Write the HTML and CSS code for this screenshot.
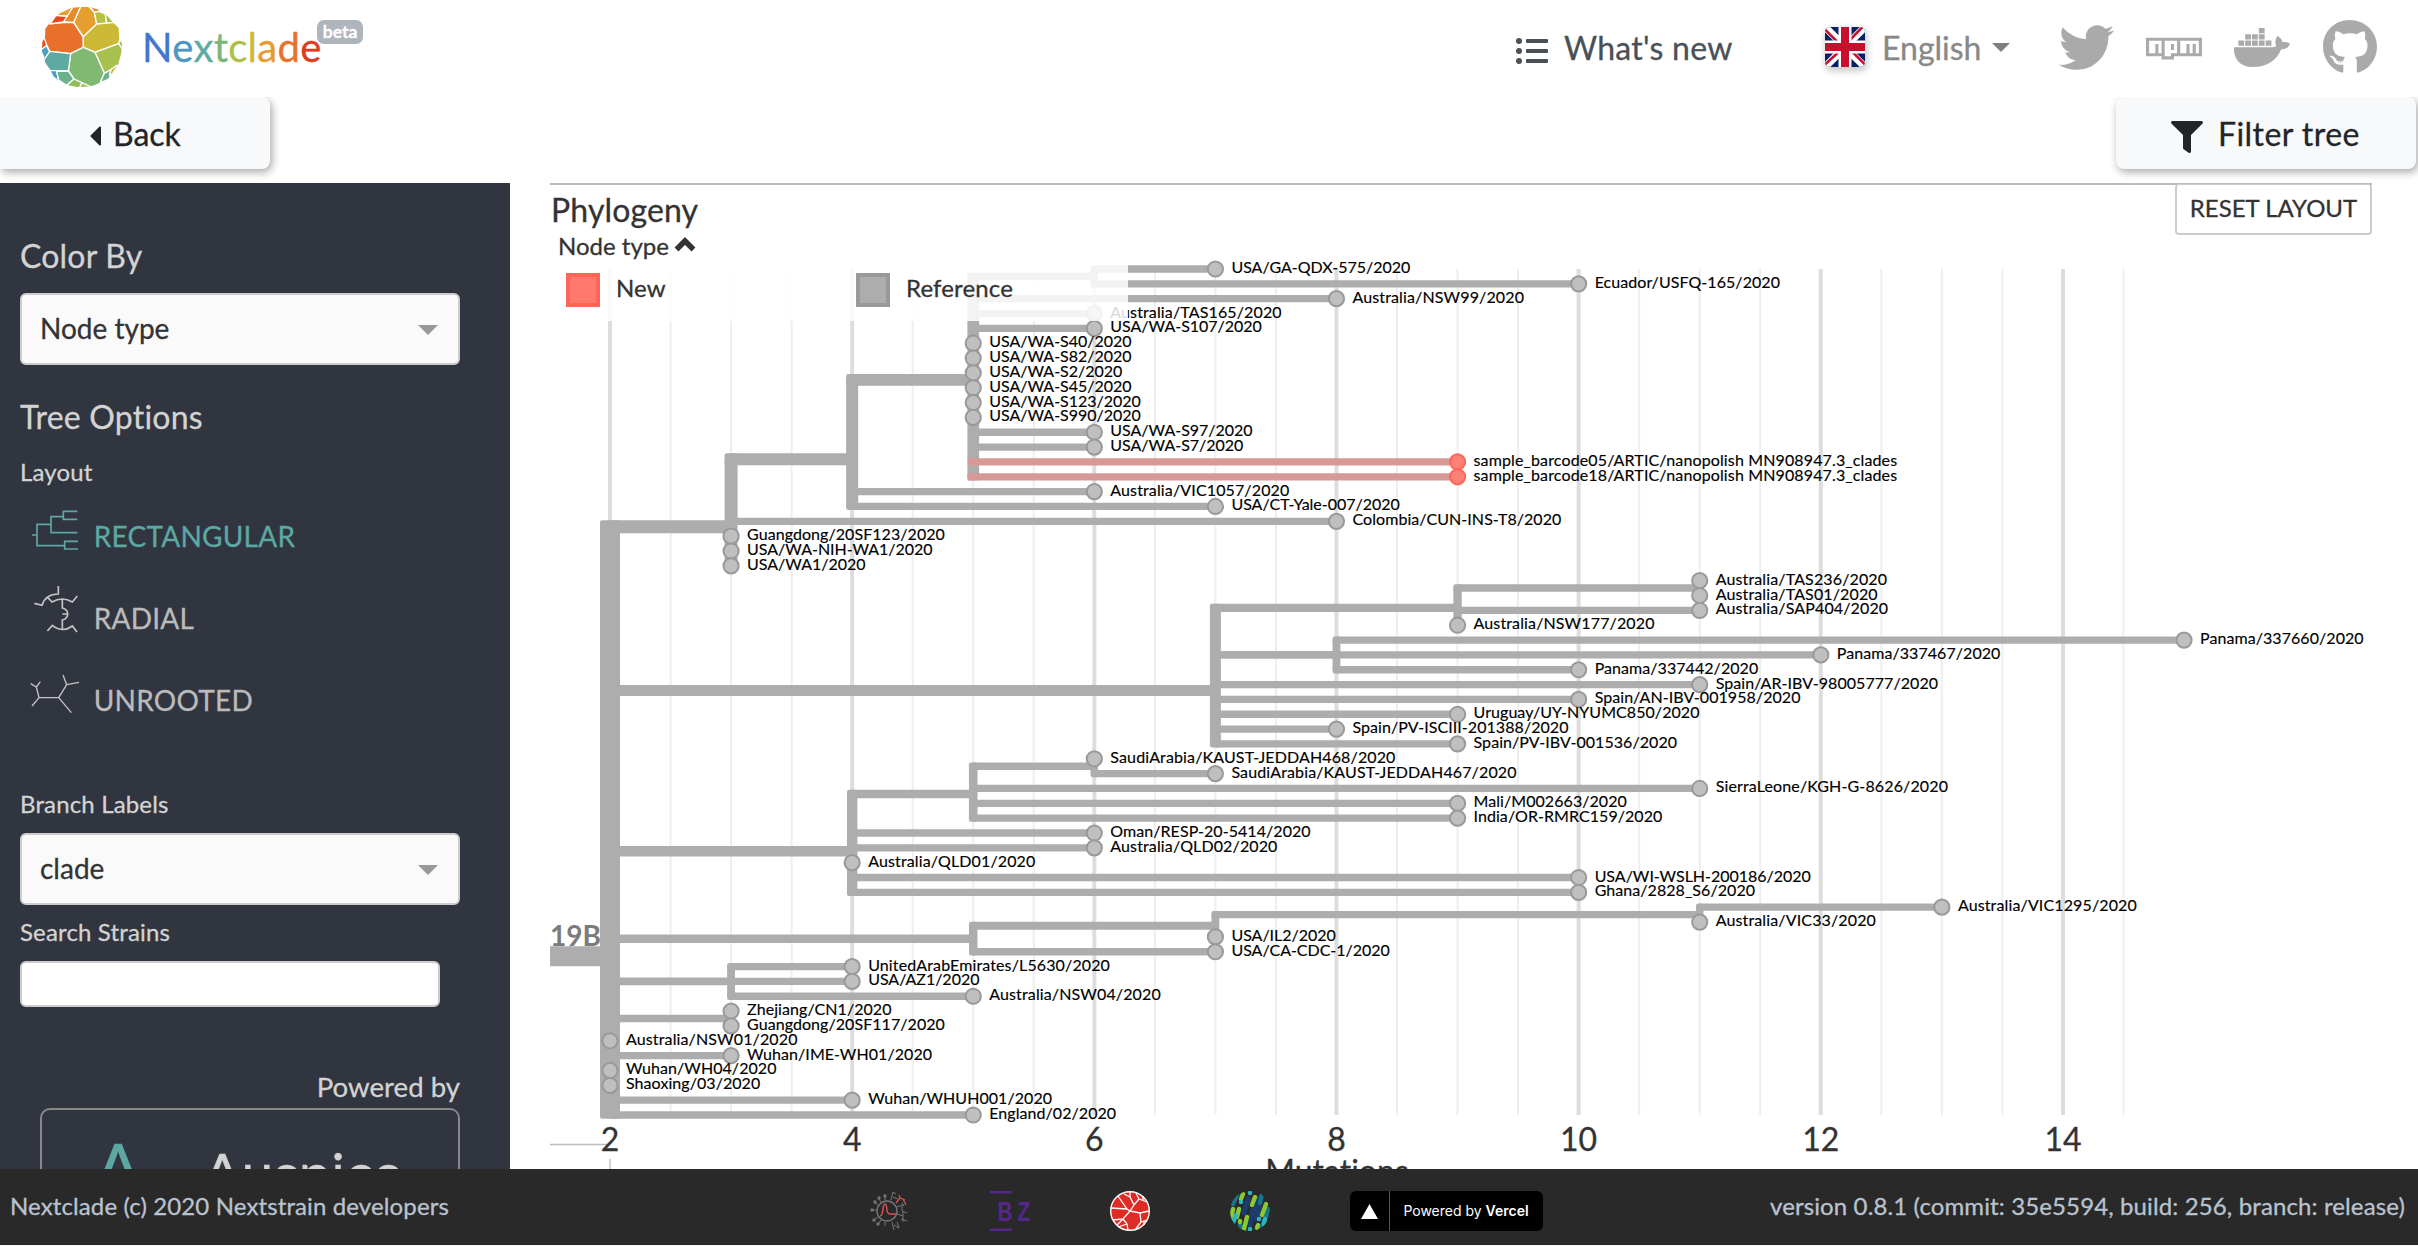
FILE: index.html
```html
<!DOCTYPE html>
<html lang="en">
<head>
<meta charset="utf-8">
<title>Nextclade</title>
<link rel="stylesheet" href="styles.css">
</head>
<body>
<div class="page">
  <header class="header">
    <a class="brand">
      <svg class="brand-logo" viewBox="126 21 240 240">
        <defs><clipPath id="ball"><path d="M240 21 L268 21 L292 28 L322 48 L340 68 L356 84 L358 120 L366 130 L364 158 L355 192 L340 214 L326 238 L304 244 L294 254 L266 259 L238 262 L204 256 L180 246 L160 228 L150 208 L136 190 L134 172 L126 156 L127 125 L135 112 L136 86 L156 60 L182 38 L214 24Z"/></clipPath></defs>
        <g clip-path="url(#ball)" stroke="#fff" stroke-width="4" stroke-linejoin="round">
          <path fill="#e8702a" d="M126 70L221 67L250 112V142L212 161L149 154L132 118Z"/>
          <path fill="#e49f2f" d="M221 67L244 15H262L283 37L290 72L250 110Z"/>
          <path fill="#e88a2b" d="M190 65L216 15H244L221 67Z"/>
          <path fill="#e2491f" d="M150 72L168 46L202 48L190 66Z"/>
          <path fill="#e49f2f" d="M168 46L200 18L218 22L202 48Z"/>
          <path fill="#e88a2b" d="M266 15L310 15L296 36L283 37Z"/>
          <path fill="#b6c143" d="M283 37L296 34L316 42L320 70L290 72Z"/>
          <path fill="#a5bf4c" d="M316 42L350 40L345 67L320 70Z"/>
          <path fill="#ccb935" d="M250 110L290 72L345 67L368 80L356 131L285 157L250 142Z"/>
          <path fill="#a8c04e" d="M285 157L356 131L380 150L365 195L313 220Z"/>
          <path fill="#9fbe50" d="M356 131L362 118L376 130V160Z"/>
          <path fill="#7fb972" d="M250 142L285 157L313 220L300 250L268 265L222 237L205 213L212 161Z"/>
          <path fill="#5ea9a1" d="M149 154L212 161L205 213H150L128 180Z"/>
          <path fill="#4f9fbd" d="M120 150L138 136L149 154L132 180Z"/>
          <path fill="#e2491f" d="M120 120L132 112L140 136L120 152Z"/>
          <path fill="#4f9fbd" d="M140 212H170L176 246L150 240Z"/>
          <path fill="#6bb18c" d="M170 214L205 213L222 237L200 256L176 240Z"/>
          <path fill="#93bc5c" d="M200 256L222 237L246 248L238 268Z"/>
          <path fill="#a8c04e" d="M238 264L246 248L268 258L262 270Z"/>
          <path fill="#6bb18c" d="M313 220L334 208L328 236L300 250Z"/>
          <path fill="#ccb935" d="M334 208L350 196L350 220L328 224Z"/>
        </g>
      </svg>
      <span class="brand-name"><i style="color:#4377cd">N</i><i style="color:#4c97bf">e</i><i style="color:#5eaba2">x</i><i style="color:#79b778">t</i><i style="color:#aebf48">c</i><i style="color:#ccb935">l</i><i style="color:#e69b2e">a</i><i style="color:#e8722a">d</i><i style="color:#df3b21">e</i></span>
      <span class="badge">beta</span>
    </a>
    <nav class="links">
      <a class="whats-new">
        <svg class="list-icon" viewBox="0 0 32 26" fill="#495057"><circle cx="3" cy="3" r="3"/><circle cx="3" cy="13" r="3"/><circle cx="3" cy="23" r="3"/><rect x="10" y="1" width="22" height="4" rx="1"/><rect x="10" y="11" width="22" height="4" rx="1"/><rect x="10" y="21" width="22" height="4" rx="1"/></svg>
        <span>What's new</span>
      </a>
      <a class="language">
        <svg class="flag" viewBox="0 0 40 40"><path fill="#012169" d="M0 0H40V40H0Z"/><path stroke="#fff" stroke-width="7.5" d="M0 0L40 40M40 0L0 40"/><path stroke="#c8102e" stroke-width="2.6" d="M-1 1.5L16 18.5M24 21.5L41 38.5M38.5 -1L22 16M-1 38.5L18 21"/><path stroke="#fff" stroke-width="13" d="M20 0V40M0 20H40"/><path stroke="#c8102e" stroke-width="8" d="M20 0V40M0 20H40"/></svg>
        <span>English</span>
        <b class="caret"></b>
      </a>
      <svg class="social twitter" viewBox="0 0 512 512"><path d="M459.37 151.716c.325 4.548.325 9.097.325 13.645 0 138.72-105.583 298.558-298.558 298.558-59.452 0-114.68-17.219-161.137-47.106 8.447.974 16.568 1.299 25.34 1.299 49.055 0 94.213-16.568 130.274-44.832-46.132-.975-84.792-31.188-98.112-72.772 6.498.974 12.995 1.624 19.818 1.624 9.421 0 18.843-1.3 27.614-3.573-48.081-9.747-84.143-51.98-84.143-102.985v-1.299c13.969 7.797 30.214 12.67 47.431 13.319-28.264-18.843-46.781-51.005-46.781-87.391 0-19.492 5.197-37.36 14.294-52.954 51.655 63.675 129.3 105.258 216.365 109.807-1.624-7.797-2.599-15.918-2.599-24.04 0-57.828 46.782-104.934 104.934-104.934 30.213 0 57.502 12.67 76.67 33.137 23.715-4.548 46.456-13.32 66.599-25.34-7.798 24.366-24.366 44.833-46.132 57.827 21.117-2.273 41.584-8.122 60.426-16.243-14.292 20.791-32.161 39.308-52.628 54.253z"/></svg>
      <svg class="social npm" viewBox="0 0 576 512"><path d="M288 288h-32v-64h32v64zm288-128v192H288v32H160v-32H0V160h576zm-416 32H32v128h64v-96h32v96h32V192zm160 0H192v160h64v-32h64V192zm224 0H352v128h64v-96h32v96h32v-96h32v96h32V192z"/></svg>
      <svg class="social docker" viewBox="0 0 640 512"><path d="M349.9 236.3h-66.1v-59.4h66.1v59.4zm0-204.3h-66.1v60.7h66.1V32zm78.2 144.8H362v59.4h66.1v-59.4zm-156.3-72.1h-66.1v60.1h66.1v-60.1zm78.1 0h-66.1v60.1h66.1v-60.1zm276.8 100c-14.4-9.7-47.6-13.2-73.1-8.4-3.3-24-16.7-44.9-41.1-63.7l-14-9.3-9.3 14c-18.4 27.8-23.4 73.6-3.7 103.8-8.7 4.7-25.8 11.1-48.4 10.7H2.4c-8.7 50.8 5.8 116.8 44 162.1 37.1 43.9 92.7 66.2 165.4 66.2 157.4 0 273.9-72.5 328.4-204.2 21.4.4 67.6.1 91.3-45.2 1.5-2.5 6.6-13.2 8.5-17.1l-13.3-8.9zm-511.1-27.9h-66v59.4h66.1v-59.4zm78.1 0h-66.1v59.4h66.1v-59.4zm78.1 0h-66.1v59.4h66.1v-59.4zm-78.1-72.1h-66.1v60.1h66.1v-60.1z"/></svg>
      <svg class="social github" viewBox="0 0 496 512"><path d="M165.9 397.4c0 2-2.3 3.6-5.2 3.6-3.3.3-5.6-1.3-5.6-3.6 0-2 2.3-3.6 5.2-3.6 3-.3 5.6 1.3 5.6 3.6zm-31.1-4.5c-.7 2 1.3 4.3 4.3 4.9 2.6 1 5.6 0 6.2-2s-1.3-4.3-4.3-5.2c-2.6-.7-5.5.3-6.2 2.3zm44.2-1.7c-2.9.7-4.9 2.6-4.6 4.9.3 2 2.9 3.3 5.9 2.6 2.9-.7 4.9-2.6 4.6-4.6-.3-1.9-3-3.2-5.9-2.9zM244.8 8C106.1 8 0 113.3 0 252c0 110.9 69.8 205.8 169.5 239.2 12.8 2.3 17.3-5.6 17.3-12.1 0-6.2-.3-40.4-.3-61.4 0 0-70 15-84.7-29.8 0 0-11.4-29.1-27.8-36.6 0 0-22.9-15.7 1.6-15.4 0 0 24.9 2 38.6 25.8 21.9 38.6 58.6 27.5 72.9 20.9 2.3-16 8.8-27.1 16-33.7-55.9-6.2-112.3-14.3-112.3-110.5 0-27.5 7.6-41.3 23.6-58.9-2.6-6.5-11.1-33.3 2.6-67.9 20.9-6.5 69 27 69 27 20-5.6 41.5-8.5 62.8-8.5s42.8 2.9 62.8 8.5c0 0 48.1-33.6 69-27 13.7 34.7 5.2 61.4 2.6 67.9 16 17.7 25.8 31.5 25.8 58.9 0 96.5-58.9 104.2-114.8 110.5 9.2 7.9 17 22.9 17 46.4 0 33.7-.3 75.4-.3 83.6 0 6.5 4.6 14.4 17.3 12.1C428.2 457.8 496 362.9 496 252 496 113.3 383.5 8 244.8 8z"/></svg>
    </nav>
  </header>

  <div class="toolbar">
    <button class="tool back"><svg width="11" height="20" viewBox="0 0 11 20"><path fill="#212529" stroke="#212529" stroke-width="2" stroke-linejoin="round" d="M10 1.5V18.5L1.5 10Z"/></svg><span>Back</span></button>
    <button class="tool filter"><svg width="32" height="32" viewBox="0 0 512 512"><path fill="#212529" d="M487.976 0H24.028C2.71 0-8.047 25.866 7.058 40.971L192 225.941V432c0 7.831 3.821 15.17 10.237 19.662l80 55.98C298.02 518.69 320 507.493 320 487.98V225.941l184.947-184.97C520.021 25.896 509.338 0 487.976 0z"/></svg><span>Filter tree</span></button>
  </div>

  <div class="content">
    <aside class="sidebar">
      <h2 class="side-title">Color By</h2>
      <div class="select first"><span>Node type</span><b></b></div>
      <h2 class="side-title options">Tree Options</h2>
      <h3 class="side-label layout-label">Layout</h3>
      <div class="layout active"><svg viewBox="60 360 200 246"><path d="M96 465H111M153 433H111V497H194M190 410H153V458H232M232 394H190V418H232M234 484H194V507H234"/></svg><span>RECTANGULAR</span></div>
      <div class="layout"><svg viewBox="60 606 200 246"><path d="M175 618V642Q136 642 126 676L103 670M143 652L156 666Q187 648 217 666L232 648M187 658V684Q203 688 203 702T187 720V746M187 702H202M142 753L157 736Q187 760 217 738L231 756"/></svg><span>RADIAL</span></div>
      <div class="layout thin"><svg viewBox="60 852 200 246"><path d="M92 911L109 921L121 905M109 921L117 953L96 978M117 953H176L214 998M176 953L200 914L189 885M200 914L237 907"/></svg><span>UNROOTED</span></div>
      <h3 class="side-label branch-label">Branch Labels</h3>
      <div class="select"><span>clade</span><b></b></div>
      <h3 class="side-label search-label">Search Strains</h3>
      <input class="search" type="text" aria-label="Search strains">
      <div class="powered">Powered by</div>
      <div class="auspice"><span class="mark">A</span><span class="name">Auspice</span></div>
    </aside>

    <main class="tree-panel">
      <svg id="tree" class="tree" viewBox="550 183 1822 986"></svg>
      <div class="panel-head">
        <h1>Phylogeny</h1>
        <button class="reset">RESET LAYOUT</button>
      </div>
      <div class="legend-title">Node type <svg width="22" height="15" viewBox="0 0 22 15"><path d="M2.5 12.5L11 4L19.5 12.5" fill="none" stroke="#333" stroke-width="5.5"/></svg></div>
      <div class="legend">
        <span class="item"><b class="swatch new"></b>New</span>
        <span class="item"><b class="swatch ref"></b>Reference</span>
      </div>
    </main>
  </div>

  <footer class="footer">
    <span class="copy">Nextclade (c) 2020 Nextstrain developers</span>
    <div class="logos">
      <svg width="40" height="40" viewBox="0 0 40 40" fill="none" stroke="#777" stroke-width="1"><circle cx="17" cy="20" r="10" stroke-width="1.4"/><path d="M10 25C14 25 12 13 15 13S15 23 20 23H26" stroke="#d9534f" stroke-width="1.4"/><path d="M7 19H3M8 14L5 12M11 11L9 8M15 9V6M8 26L5 28M11 29L9 32M15 31V35M21 9L23 1L26 3M23 6L28 8M22 31L24 39M24 34L29 37L27 31M27 16L32 14V20L37 22M27 23L33 25V31M31 28L37 30M33 20V25"/><path d="M26 12L30 7L35 9M30 7L29 4M33 8L36 14" stroke="#d9534f" stroke-width="1.3"/><path d="M32 12L34 15" stroke="#4c90c0"/><g stroke-width="1.4"><circle cx="2" cy="19" r="1"/><circle cx="5" cy="11" r="1"/><circle cx="9" cy="7" r="1"/><circle cx="15" cy="5" r="1"/><circle cx="4" cy="29" r="1"/><circle cx="8" cy="33" r="1"/></g></svg>
      <svg class="bz" width="40" height="40" viewBox="0 0 40 40"><path d="M0 0H22V2.6H0ZM0 37.4H22V40H0Z"/><text x="7.5" y="29.8" textLength="15" lengthAdjust="spacingAndGlyphs">B</text><text x="27.3" y="29.8" textLength="13" lengthAdjust="spacingAndGlyphs">Z</text></svg>
      <svg width="40" height="40" viewBox="0 0 40 40"><circle cx="20" cy="20" r="19.3" fill="#df2b26" stroke="#fff" stroke-width="1.4"/><path fill="none" stroke="#fff" stroke-width="1.3" d="M20 20L17 18L8 5M17 18L1 17M20 20L13 28L3 29M13 28L17 33L18 39M17 33L8 36M13 28L7 34M20 20L24 14L20 6L14 3M20 6L20 1M24 14L29 8L37 11M29 8L26 2M33 9L33 5M20 20L30 22L39 20M30 22L31 31L25 39M31 31L37 29M34 30L34 34"/></svg>
      <svg width="40" height="40" viewBox="0 0 40 40"><defs><clipPath id="disc"><circle cx="20" cy="20" r="20"/></clipPath></defs><g clip-path="url(#disc)" fill="none" stroke-width="4.4" stroke-linecap="round"><path stroke="#1c3c70" stroke-width="5" d="M18 8L14 22M28 8L24 22M22 20L20 34M29 16L26 28"/><path stroke="#15778a" d="M7 4L3 13M32 3L30 12M38 18L36 26M34 30L31 39M10 34L15 41"/><path stroke="#8bc832" d="M13 3L11 8M3 18L1 28M9 18L7 26M10 30V31M17 26L14 38M25 6L22 14M36 13L32 24M28 34L27 37"/><path stroke="#2bb5c0" d="M20 1V2M11 11V11M6 24L3 32M29 28V28M35 28L34 33M20 39V38"/></g></svg>
      <div class="vercel"><span class="tri"><svg width="17" height="15" viewBox="0 0 17 15"><path fill="#fff" d="M8.5 0L17 15H0Z"/></svg></span><span class="vtext">Powered by <b>Vercel</b></span></div>
    </div>
    <span class="version">version 0.8.1 (commit: 35e5594, build: 256, branch: release)</span>
  </footer>
</div>
<script src="tree.js"></script>
</body>
</html>
```
FILE: styles.css
```css
* { box-sizing: border-box; }
body { margin: 0; background: #fff; font-family: Lato, "Liberation Sans", sans-serif; color: #333; font-variant-ligatures: none; -webkit-text-stroke: .3px; }
h1, h2, h3 { margin: 0; font-weight: 400; }
button { font-family: inherit; font-variant-ligatures: none; }
svg { display: block; flex: none; }

.page { width: 2418px; height: 1246px; display: flex; flex-direction: column; overflow: hidden; border-bottom: 1px solid #f4f4f4; }

.header { height: 97px; flex: none; display: flex; justify-content: space-between; }
.brand { display: flex; padding: 7px 0 0 42px; }
.brand-logo { width: 80px; height: 80px; }
.brand-name { width: 177px; font-size: 40px; line-height: 48px; margin: 16px 0 0 20px; letter-spacing: .3px; }
.brand-name i { font-style: normal; }
.badge { align-self: flex-start; width: 46px; height: 24px; margin: 13px 0 0 -2px; border-radius: 7px; background: #adb5bd; color: #fff; font-size: 17.5px; font-weight: 700; line-height: 24px; text-align: center; }
.links { display: flex; align-items: center; height: 94px; padding-right: 41px; font-size: 32px; }
.whats-new, .language { display: flex; align-items: center; }
.whats-new { color: #495057; margin-right: 94px; }
.list-icon { width: 32px; height: 26px; margin: 8px 16px 0 0; }
.whats-new span { width: 167px; white-space: nowrap; letter-spacing: .25px; }
.language { color: #888; margin-right: 49px; }
.language span { width: 100px; margin: 0 10px 0 17px; }
.flag { width: 40px; height: 40px; border-radius: 5px; box-shadow: 1px 3px 7px 1px rgba(0,0,0,.22); }
.caret { border: 9px solid transparent; border-top-color: #808080; border-bottom: 0; }
.social { fill: #aaa; }
.twitter { width: 55px; height: 55px; margin-right: 32px; }
.npm { width: 56px; height: 50px; margin-right: 32px; }
.docker { width: 56px; height: 45px; margin-right: 33px; }
.github { width: 54px; height: 56px; }

.toolbar { height: 86px; flex: none; display: flex; justify-content: space-between; padding-right: 2px; overflow: hidden; }
.tool { height: 72px; border: 0; border-radius: 8px; background: #f8f9fb; color: #212529; font-size: 32px; display: flex; align-items: center; padding: 0; box-shadow: 2px 3px 8px rgba(0,0,0,.35); }
.back { width: 270px; border-radius: 0 8px 8px 0; padding-left: 90px; gap: 12px; }
.back svg { margin-top: 6px; }
.filter { width: 300px; padding-left: 55px; gap: 15px; letter-spacing: .45px; }
.filter svg { margin-top: 8px; }

.content { height: 986px; flex: none; display: flex; overflow: hidden; }
.sidebar { width: 510px; height: 986px; overflow: hidden; flex: none; background: #30353f; padding: 54px 50px 0 20px; color: #d3d3d3; }
.side-title { font-size: 32px; line-height: 38px; height: 40px; letter-spacing: .2px; }
.side-label { font-size: 24px; line-height: 32px; letter-spacing: .15px; }
.select { height: 72px; border: 2px solid #ccc; border-radius: 6px; background: #fafafa; color: #333; font-size: 28px; padding: 0 20px 3px 18px; display: flex; align-items: center; justify-content: space-between; }
.select.first { margin-top: 16px; }
.select b { border: 10px solid transparent; border-top-color: #999; border-bottom: 0; margin-top: 4px; }
.side-title.options { margin-top: 33px; }
.layout-label { margin: 18px 0 12px; }
.layout { height: 82px; display: flex; color: #bbb; font-size: 28px; letter-spacing: .25px; }
.layout svg { width: 66.7px; height: 82px; fill: none; stroke: #c4c4c4; stroke-width: 5; }
.layout.thin svg { stroke-width: 4; }
.layout span { margin: 19px 0 0 7px; line-height: 34px; }
.layout.active { color: #5da8a3; }
.layout.active svg { stroke: #5da8a3; }
.branch-label { margin: 42px 0 13px; }
.search-label { margin: 11px 0 13px; }
.search { display: block; width: 420px; height: 46px; border: 2px solid #ccc; border-radius: 6px; background: #fff; }
.powered { margin-top: 63px; text-align: right; font-size: 27.6px; line-height: 34px; }
.auspice { margin: 4px 0 0 20px; width: 420px; height: 130px; border: 2px solid #888; border-radius: 10px; display: flex; line-height: 68px; }
.auspice .mark { margin: 24px 0 0 45px; width: 62px; text-align: center; color: #5da8a3; font-size: 72px; }
.auspice .name { margin: 28px 0 0 54px; font-size: 57px; letter-spacing: .5px; }

.tree-panel { position: relative; width: 1822px; margin-left: 40px; border-top: 2px solid #bbb; }
.tree { position: absolute; left: 0; top: -2px; width: 1822px; height: 986px; }
.tree text { font-family: Lato, "Liberation Sans", sans-serif; }
.tip-label { font-size: 16px; fill: #000; stroke: #000; stroke-width: .15px; }
.tick { font-size: 32px; fill: #333; stroke: #333; stroke-width: .3px; text-anchor: middle; }
.clade { font-size: 28px; font-weight: 700; fill: #7b7b7b; }
.panel-head { position: relative; display: flex; justify-content: space-between; height: 46px; }
.panel-head h1 { font-size: 32px; line-height: 40px; padding: 5px 0 0 1px; letter-spacing: .15px; }
.reset { width: 197px; height: 51px; margin-top: -1px; padding: 0 0 3px; border: 2px solid #ccc; border-top-width: 1px; border-radius: 4px; background: #fff; color: #333; font-size: 24px; }
.legend-title { position: relative; display: flex; gap: 5px; padding-left: 8px; font-size: 24px; line-height: 30px; height: 31px; width: 182px; }
.legend-title svg { margin-top: 6px; }
.legend { position: relative; width: 578px; height: 59px; background: rgba(255,255,255,.85); display: grid; grid-template-columns: 290px 1fr; padding: 11px 0 0 16px; font-size: 24px; line-height: 29px; letter-spacing: .15px; }
.item { display: flex; gap: 16px; }
.swatch { width: 34px; height: 34px; border: 4px solid; }
.swatch.new { background: #ff796d; border-color: #ff6557; }
.swatch.ref { background: #adadad; border-color: #999; }

.footer { height: 76px; flex: none; background: #292929; color: #b9c3cf; display: grid; grid-template-columns: 1fr auto 1fr; align-items: center; padding: 0 13px 0 10px; font-size: 24px; letter-spacing: .12px; }
.copy, .version { padding-bottom: 3px; }
.logos { display: flex; gap: 80px; margin: 8px 3px 0 0; letter-spacing: 0; }
.bz { fill: #56278a; font: 700 28.5px "Liberation Sans", sans-serif; }
.vercel { display: flex; width: 193px; height: 40px; border-radius: 6px; background: #000; color: #fff; font: 14px Inter, sans-serif; -webkit-text-stroke: 0; }
.tri { width: 40px; border-right: 1px solid #555; display: grid; place-items: center; }
.vtext { flex: 1; line-height: 39px; text-align: center; white-space: nowrap; }
.vtext b { font-weight: 600; }
.version { text-align: right; }
```
FILE: tree.js
```js
const X0 = 610, DX = 121.08, Y0 = 269, DY = 14.842;
const px = m => X0 + (m - 2) * DX;
let row = 0;
const tip = (name, m, cls) => ({ name, m, cls, row: row++ });
const node = (m, width, ...kids) => ({ m, width, kids, row: kids.reduce((s, k) => s + k.row, 0) / kids.length });

const root = node(2, 20,
  node(3, 13,
    node(4, 12,
      node(5, 11.7,
        node(6, 7.3, tip('USA/GA-QDX-575/2020', 7), tip('Ecuador/USFQ-165/2020', 10)),
        tip('Australia/NSW99/2020', 8), tip('Australia/TAS165/2020', 6), tip('USA/WA-S107/2020', 6),
        tip('USA/WA-S40/2020', 5), tip('USA/WA-S82/2020', 5), tip('USA/WA-S2/2020', 5),
        tip('USA/WA-S45/2020', 5), tip('USA/WA-S123/2020', 5), tip('USA/WA-S990/2020', 5),
        tip('USA/WA-S97/2020', 6), tip('USA/WA-S7/2020', 6),
        tip('sample_barcode05/ARTIC/nanopolish MN908947.3_clades', 9, 'new'),
        tip('sample_barcode18/ARTIC/nanopolish MN908947.3_clades', 9, 'new')),
      tip('Australia/VIC1057/2020', 6), tip('USA/CT-Yale-007/2020', 7)),
    tip('Colombia/CUN-INS-T8/2020', 8), tip('Guangdong/20SF123/2020', 3),
    tip('USA/WA-NIH-WA1/2020', 3), tip('USA/WA1/2020', 3)),
  node(7, 11,
    node(9, 8.4, node(11, 7.5, tip('Australia/TAS236/2020', 11), tip('Australia/TAS01/2020', 11)),
      tip('Australia/SAP404/2020', 11), tip('Australia/NSW177/2020', 9)),
    node(8, 7.8, tip('Panama/337660/2020', 15), tip('Panama/337467/2020', 12), tip('Panama/337442/2020', 10)),
    tip('Spain/AR-IBV-98005777/2020', 11), tip('Spain/AN-IBV-001958/2020', 10),
    tip('Uruguay/UY-NYUMC850/2020', 9), tip('Spain/PV-ISCIII-201388/2020', 8), tip('Spain/PV-IBV-001536/2020', 9)),
  node(4, 10.4,
    node(5, 8.6, node(6, 7.4, tip('SaudiArabia/KAUST-JEDDAH468/2020', 6), tip('SaudiArabia/KAUST-JEDDAH467/2020', 7)),
      tip('SierraLeone/KGH-G-8626/2020', 11), tip('Mali/M002663/2020', 9), tip('India/OR-RMRC159/2020', 9)),
    tip('Oman/RESP-20-5414/2020', 6), tip('Australia/QLD02/2020', 6), tip('Australia/QLD01/2020', 4),
    tip('USA/WI-WSLH-200186/2020', 10), tip('Ghana/2828_S6/2020', 10)),
  node(5, 8.5,
    node(7, 7.8, node(11, 7.4, tip('Australia/VIC1295/2020', 13), tip('Australia/VIC33/2020', 11)), tip('USA/IL2/2020', 7)),
    tip('USA/CA-CDC-1/2020', 7)),
  node(3, 7.9, tip('UnitedArabEmirates/L5630/2020', 4), tip('USA/AZ1/2020', 4), tip('Australia/NSW04/2020', 5)),
  node(3, 7.4, tip('Zhejiang/CN1/2020', 3), tip('Guangdong/20SF117/2020', 3)),
  tip('Australia/NSW01/2020', 2), tip('Wuhan/IME-WH01/2020', 3), tip('Wuhan/WH04/2020', 2),
  tip('Shaoxing/03/2020', 2), tip('Wuhan/WHUH001/2020', 4), tip('England/02/2020', 5));

const py = n => Y0 + n.row * DY;
const tracking = name => /^USA/.test(name) ? -0.02 : /^(sample|Austr|Saudi|United|Sierra)/.test(name) ? 0.13 : 0.06;
let grid = '', stems = '', fresh = '', dots = '', labels = '';

for (let m = 2; m <= 14.5; m += 0.5) {
  const major = m % 2 === 0;
  grid += `<line x1="${px(m)}" x2="${px(m)}" y1="269" y2="1115" stroke="${major ? '#ddd' : '#eee'}" stroke-width="${major ? 4 : 2}"/>`;
  if (major) labels += `<text class="tick" x="${px(m)}" y="1150.5">${m}</text>`;
}

function draw(n) {
  const x = px(n.m), y = py(n);
  if (n.kids) {
    stems += `<line x1="${x}" x2="${x}" y1="${py(n.kids[0])}" y2="${py(n.kids.at(-1))}" stroke-width="${n.width}"/>`;
    for (const k of n.kids) {
      const line = `<line x1="${x}" x2="${px(k.m)}" y1="${py(k)}" y2="${py(k)}" stroke-width="${k.width || 7.3}"/>`;
      if (k.cls) fresh += `<line x1="${x - 5.5}" x2="${px(k.m)}" y1="${py(k)}" y2="${py(k)}"/>`;
      else if (k.m > n.m) stems += line;
      const half = n.width / 2, t = (k.width || 7.3) / 2;
      if ((k === n.kids[0] || k === n.kids.at(-1)) && k.m > n.m)
        stems += `<rect x="${x - half}" y="${py(k) - t}" width="${n.width}" height="${t * 2}" rx="2" fill="#adadad" stroke="none"/>`;
      draw(k);
    }
  } else {
    dots += `<circle cx="${x}" cy="${y}" r="7.6" fill="${n.cls ? '#ff8075' : '#bfbfbf'}" stroke="${n.cls ? '#ff6557' : '#999'}" stroke-width="2"/>`;
    labels += `<text class="tip-label" x="${x + 16}" y="${Math.round(y + 4)}" letter-spacing="${tracking(n.name)}">${n.name}</text>`;
  }
}
draw(root);

document.getElementById('tree').innerHTML =
  grid +
  `<path d="M550 1144.5H610M610 1159V1169" stroke="#bbb" stroke-width="1.3"/>` +
  `<g stroke="#adadad">${stems}<line x1="550" x2="610" y1="956.3" y2="956.3" stroke-width="20"/></g>` +
  `<g stroke="#d89996" stroke-width="7.3">${fresh}</g>` + dots + labels +
  `<text class="clade" x="550" y="946">19B</text><text class="tick" x="1337" y="1183">Mutations</text>`;
```
